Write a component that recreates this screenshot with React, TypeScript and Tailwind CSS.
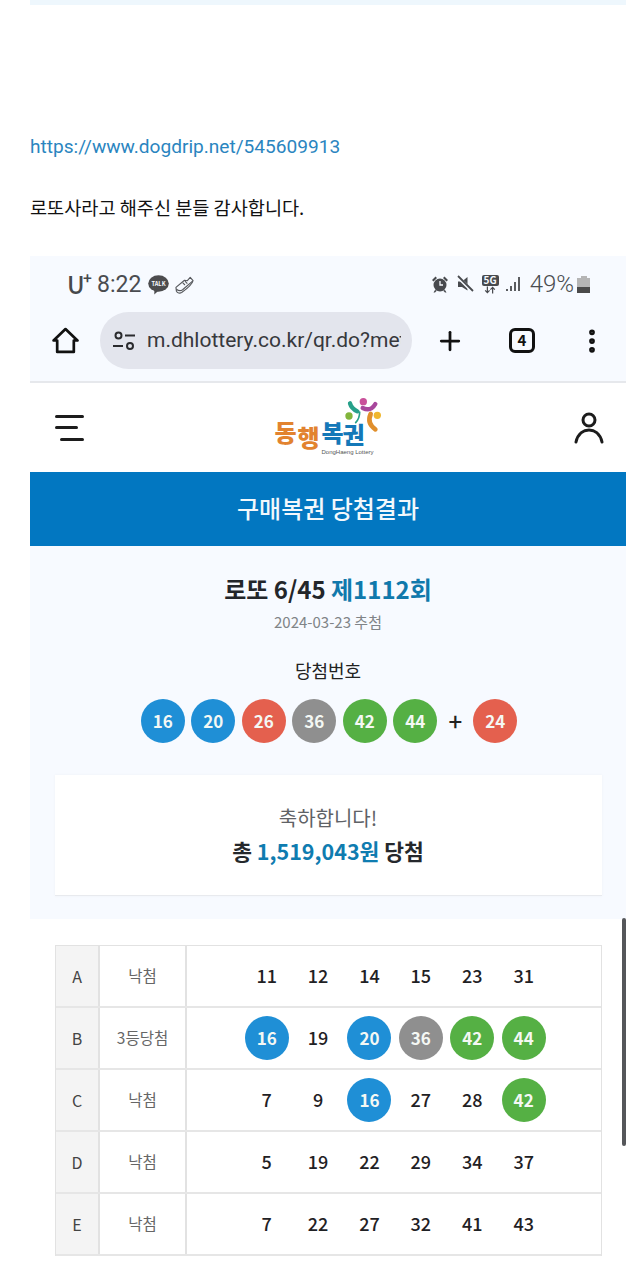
import { Plus, EllipsisVertical } from "lucide-react";

const BLUE = "bg-[#1f8fd6]";
const RED = "bg-[#e4604e]";
const GRAY = "bg-[#8f8f8f]";
const GREEN = "bg-[#55b044]";

function ballColor(n: number) {
  if (n <= 20) return BLUE;
  if (n <= 30) return RED;
  if (n <= 40) return GRAY;
  return GREEN;
}

function Ball({ n }: { n: number }) {
  return (
    <span
      className={`flex h-[44px] w-[44px] items-center justify-center rounded-full text-[17px] font-bold text-[#f4f8f4] ${ballColor(n)}`}
    >
      {n}
    </span>
  );
}

const rows: { label: string; result: string; numbers: number[]; hits: number[] }[] = [
  { label: "A", result: "낙첨", numbers: [11, 12, 14, 15, 23, 31], hits: [] },
  { label: "B", result: "3등당첨", numbers: [16, 19, 20, 36, 42, 44], hits: [16, 20, 36, 42, 44] },
  { label: "C", result: "낙첨", numbers: [7, 9, 16, 27, 28, 42], hits: [16, 42] },
  { label: "D", result: "낙첨", numbers: [5, 19, 22, 29, 34, 37], hits: [] },
  { label: "E", result: "낙첨", numbers: [7, 22, 27, 32, 41, 43], hits: [] },
];

function StatusBar() {
  return (
    <div className="flex h-[56px] items-center justify-between pl-[37px] pr-[36px] text-[#4a4c50]">
      <div className="flex items-center">
        <span className="relative w-[30px] text-[24px] font-medium leading-none text-[#46484c]">
          U<sup className="absolute left-[16px] top-[-2px] text-[15px] font-bold leading-none">+</sup>
        </span>
        <span className="font-['Roboto',sans-serif] text-[23px] leading-none">8:22</span>
        <svg viewBox="0 0 20 20" className="ml-[7px] h-[21px] w-[21px]">
          <ellipse cx="10" cy="9" rx="9.8" ry="7.8" fill="#4c4c4e" />
          <path d="M6 14 L6 19.5 L11 15 Z" fill="#4c4c4e" />
          <text x="10" y="11" textAnchor="middle" fontSize="5.4" fontWeight="700" fill="#f7faff">
            TALK
          </text>
        </svg>
        <svg viewBox="0 0 20 20" className="ml-[6px] h-[19px] w-[19px]" fill="none" stroke="#56585c" strokeWidth="1.2" strokeLinejoin="round">
          <path d="M1 13 L10 5.5 L13 6 L16 2.5 L19 6 C18 10 12 15 7 18.5 C5 19.5 2.5 19 1.5 17 Z" />
          <path d="M1.5 15 C4 17 6 17 8 15.5 L18.5 6.5" />
          <path d="M8 8 L10.5 10.5 M10.5 6.5 L13 9" />
        </svg>
      </div>
      <div className="flex items-center">
        <svg viewBox="0 0 18 18" className="h-[18px] w-[18px]" fill="#484a4e">
          <circle cx="9" cy="10" r="6.5" />
          <path d="M1 5 L4.5 1.5 L6 3 L2.5 6.5 Z M17 5 L13.5 1.5 L12 3 L15.5 6.5 Z M4 15 L2.5 17.5 L4 17.5 L6 15.5 Z M14 15 L15.5 17.5 L14 17.5 L12 15.5 Z" />
          <path d="M9 6 V10 H12" stroke="#f7faff" strokeWidth="1.3" fill="none" />
        </svg>
        <svg viewBox="0 0 18 18" className="ml-[7px] h-[18px] w-[18px]" fill="#484a4e">
          <path d="M2 6.5 H6 L11.5 2 V15.5 L6 12 H2 Z" />
          <path d="M1.5 1.5 L16.5 16.5" stroke="#f7faff" strokeWidth="3.4" />
          <path d="M2 1 L17 16" stroke="#484a4e" strokeWidth="1.8" />
        </svg>
        <span className="ml-[8px] flex w-[17px] flex-col items-center leading-none">
          <span className="flex h-[11px] w-[17px] items-center justify-center rounded-[2px] bg-[#484a4e] text-[10px] font-bold leading-none text-[#f7faff]">
            5G
          </span>
          <svg viewBox="0 0 16 8" className="h-[8px] w-[14px]" fill="none" stroke="#484a4e" strokeWidth="1.4">
            <path d="M5 0 V7 M2.5 4.5 L5 7 L7.5 4.5 M11 8 V1 M8.5 3.5 L11 1 L13.5 3.5" />
          </svg>
        </span>
        <svg viewBox="0 0 16 16" className="ml-[7px] h-[16px] w-[16px]" fill="#5a5c60">
          <rect x="0" y="13" width="2" height="2" />
          <rect x="4" y="10" width="2" height="5" />
          <rect x="8" y="6" width="2" height="9" />
          <rect x="12" y="1" width="2" height="14" />
        </svg>
        <span className="ml-[8px] font-['Roboto',sans-serif] text-[24px] font-light leading-none">49%</span>
        <span className="ml-[3px] flex h-[17px] w-[13px] flex-col items-center">
          <span className="h-[2px] w-[6px] bg-[#b5b5b5]" />
          <span className="flex w-full flex-1 flex-col">
            <span className="h-[9px] bg-[#b5b5b5]" />
            <span className="flex-1 bg-[#4a4a4a]" />
          </span>
        </span>
      </div>
    </div>
  );
}

function Toolbar() {
  return (
    <div className="flex h-[71px] items-start border-b-[2px] border-[#e6e8ec]">
      <div className="flex h-[57px] w-[70px] items-center justify-center">
        <svg viewBox="0 0 26 26" className="h-[27px] w-[27px]" fill="none" stroke="#111" strokeWidth="2.6" strokeLinejoin="round">
          <path d="M13 2 L24.5 13 H21 V24 H5 V13 H1.5 Z" />
        </svg>
      </div>
      <div className="flex h-[57px] w-[312px] items-center rounded-full bg-[#e3e5ed] pl-[12px] pr-[11px]">
        <svg viewBox="0 0 24 24" className="h-[24px] w-[24px] shrink-0" fill="none" stroke="#2a2b2e" strokeWidth="2">
          <circle cx="6.5" cy="6.5" r="3" />
          <path d="M13 6.5 H23 M1 17 H11" />
          <circle cx="18" cy="17" r="3" />
        </svg>
        <span className="ml-[11px] overflow-hidden whitespace-nowrap font-['Roboto',sans-serif] text-[21px] text-[#37383c]">
          m.dhlottery.co.kr/qr.do?met
        </span>
      </div>
      <div className="flex h-[57px] flex-1 items-center">
        <Plus size={30} strokeWidth={2.2} className="ml-[23px] text-[#111]" />
        <span className="ml-[44px] flex h-[25px] w-[26px] items-center justify-center rounded-[6px] border-[3px] border-[#111] text-[15px] font-bold text-[#111]">
          4
        </span>
        <EllipsisVertical size={30} strokeWidth={2.6} className="ml-[42px] text-[#111]" />
      </div>
    </div>
  );
}

// the logo is a small free canvas: each syllable sits at its own height
function Logo() {
  const glyph = "absolute text-[24px] font-black leading-[28px]";
  return (
    <div className="relative h-[75px] w-[130px]">
      <span className={`${glyph} left-[11px] top-[28px] text-[#e2832f]`}>동</span>
      <span className={`${glyph} left-[34px] top-[33px] text-[#e2832f]`}>행</span>
      <span className={`${glyph} left-[58px] top-[28px] text-[#1478b8]`}>복</span>
      <span className={`${glyph} left-[79px] top-[30px] text-[#1478b8]`}>권</span>
      <span className="absolute left-[58px] top-[58px] whitespace-nowrap font-['Liberation_Sans',sans-serif] text-[6px] leading-[8px] text-[#555]">
        DongHaeng Lottery
      </span>
      <svg viewBox="0 0 390 225" className="absolute left-0 top-0 h-[75px] w-[130px]" fill="none" strokeLinecap="round">
        <path d="M258 40 Q262 55 280 64" stroke="#27a08a" strokeWidth="13" />
        <circle cx="298" cy="35" r="11" fill="#c9509a" />
        <path d="M296 54 Q320 66 334 42" stroke="#a8479c" strokeWidth="13" />
        <circle cx="255" cy="78" r="11" fill="#82b53c" />
        <path d="M287 66 Q287 85 275 98" stroke="#27a08a" strokeWidth="5" />
        <circle cx="340" cy="76" r="11" fill="#f0b72e" />
        <path d="M320 72 Q308 100 334 118" stroke="#e08f2c" strokeWidth="14" />
      </svg>
    </div>
  );
}

export default function App() {
  return (
    <div className="relative h-[1280px] w-full overflow-hidden bg-white font-['Noto_Sans_CJK_KR',sans-serif] text-[#111]">
      <div className="ml-[30px] h-[5px] w-[596px] bg-[#eef7fd]" />

      <div className="ml-[30px] mt-[128px] font-['Roboto',sans-serif] text-[19.1px] leading-[28px] text-[#2a85c0]">
        https://www.dogdrip.net/545609913
      </div>
      <div className="ml-[30px] mt-[32px] text-[18.6px] leading-[28px]">로또사라고 해주신 분들 감사합니다.</div>

      <div className="ml-[30px] mt-[35px] w-[596px]">
        <div className="bg-[#f7faff]">
          <StatusBar />
          <Toolbar />
        </div>

        <div className="flex h-[89px] items-center justify-between pl-[25px] pr-[21px]">
          <div className="flex w-[29px] flex-col gap-[8.5px]">
            <span className="h-[3px] w-[29px] rounded-full bg-[#1c1c1c]" />
            <span className="h-[3px] w-[23px] rounded-full bg-[#1c1c1c]" />
            <span className="ml-[5px] h-[3px] w-[24px] rounded-full bg-[#1c1c1c]" />
          </div>
          <Logo />
          <svg viewBox="0 0 32 34" className="h-[34px] w-[32px]" fill="none" stroke="#1c1c1c" strokeWidth="3" strokeLinecap="round">
            <circle cx="16" cy="9" r="6" />
            <path d="M3 31 C5 22 11 19 16 19 C21 19 27 22 29 31" />
          </svg>
        </div>

        <div className="flex h-[74px] items-center justify-center bg-[#0277c1] pb-[2px] text-[24px] font-medium text-[#f2f8fc]">
          구매복권 당첨결과
        </div>

        <div className="flex h-[373px] flex-col items-center bg-[#f7faff] pt-[23px]">
          <div className="text-[24px] font-bold leading-[40px] text-[#23262a]">
            로또 6/45 <span className="text-[#1079ac]">제1112회</span>
          </div>
          <div className="mt-[2px] text-[15px] leading-[22px] text-[#808487]">2024-03-23 추첨</div>
          <div className="mt-[24px] text-[18px] leading-[26px] text-[#222]">당첨번호</div>
          <div className="ml-[2px] mt-[16px] flex items-center gap-[6.5px]">
            {[16, 20, 26, 36, 42, 44].map((n) => (
              <Ball key={n} n={n} />
            ))}
            <span className="w-[23px] text-center text-[24px] font-medium leading-none text-[#222]">+</span>
            <Ball n={24} />
          </div>
          <div className="mt-[32px] flex h-[121px] w-[547px] flex-col items-center justify-center border-b border-[#e8eaee] bg-white shadow-[0_0_3px_rgba(0,0,0,0.04)]">
            <div className="text-[20px] leading-[30px] text-[#5f6266]">축하합니다!</div>
            <div className="mt-[1px] text-[21.5px] font-bold leading-[34px] text-[#25282c]">
              총 <span className="text-[#0f7cb0]">1,519,043원</span> 당첨
            </div>
          </div>
        </div>

        <div className="ml-[25px] mt-[26px] w-[547px] border-l border-r border-t border-[#e2e2e2]">
          {rows.map((row) => (
            <div key={row.label} className="flex h-[62px] border-b-[2px] border-[#e6e6e6]">
              <div className="flex w-[44px] items-center justify-center border-r-[2px] border-[#e2e2e2] bg-[#f4f4f4] pb-[1px] text-[16px] text-[#444]">
                {row.label}
              </div>
              <div className="flex w-[87px] items-center justify-center border-r-[2px] border-[#e2e2e2] pb-[1px] text-[15.5px] text-[#666]">
                {row.result}
              </div>
              <div className="grid flex-1 grid-cols-[repeat(6,51.4px)] items-center pl-[54px]">
                {row.numbers.map((n) => (
                  <div key={n} className="flex justify-center">
                    {row.hits.includes(n) ? (
                      <Ball n={n} />
                    ) : (
                      <span className="pb-[1px] text-[18px] font-medium text-[#1f2124]">{n}</span>
                    )}
                  </div>
                ))}
              </div>
            </div>
          ))}
        </div>
      </div>

      <div className="absolute left-[622px] top-[918px] h-[228px] w-[4px] rounded-full bg-[#55575a]" />
    </div>
  );
}
